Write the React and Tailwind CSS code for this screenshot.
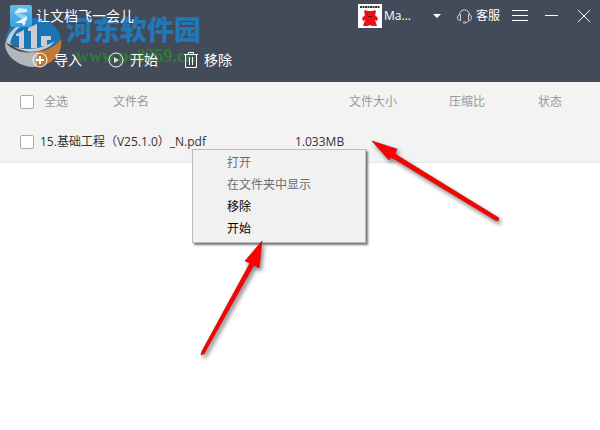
// App.jsx

import { useState } from 'react';

const menuItems = [
  { label: '打开', disabled: true },
  { label: '在文件夹中显示', disabled: true },
  { label: '移除', disabled: false },
  { label: '开始', disabled: false },
];

const boxClass =
  'block size-3.5 shrink-0 appearance-none rounded-xs border border-[#ababab] bg-white checked:bg-blue-500';

const AppLogo = () => (
  <svg viewBox="0 0 22 22" className="size-[22px]" aria-hidden="true">
    <defs>
      <linearGradient id="logoFill" x1="0" y1="0" x2="0" y2="1">
        <stop offset="0" stopColor="#62bdec" />
        <stop offset="1" stopColor="#3a9ee2" />
      </linearGradient>
    </defs>
    <rect width="22" height="22" rx="2" fill="url(#logoFill)" />
    <path d="M4 8l5-5 8 1v3l-8 1z" fill="#d5effc" />
    <path d="M4 8l5 0 8 3-3 4-7-4z" fill="#8fd0f5" />
    <path d="M17 11v4l-4 3H5l7-4zM11 17h5l-2 4z" fill="#e6f6fe" />
  </svg>
);

const Watermark = () => (
  <div className="pointer-events-none absolute left-1 top-4 flex" aria-hidden="true">
    <svg viewBox="4 16 60 52" className="h-[52px] w-[60px]">
      <path d="M5 42C6 27 18 18 33 18c15 0 27 9 28 23l-11 7c-14 3-28 2-41-6z" fill="#1d74b4" />
      <path d="M61 39c2 16-10 27-26 28l-5-2V52c13 0 25-4 31-13z" fill="#c07a33" />
      <path d="M5 42c-1 13 12 24 28 25l4-1 1-14C24 54 12 51 5 42z" fill="#b3b6bb" />
      <path d="M6 43c2-11 10-19 24-22-9 4-17 11-18 24z" fill="#c5cad0" />
      <path d="M10 43c2-8 6-14 12-17-5 6-8 11-8 20z" fill="#1d74b4" />
      <path d="M16 34l8-4v18h-5V36h-3zM28 28l9-4v24h-6V31h-3zM41 36h10v4h-4v6h-6z" fill="#c9ced4" />
      <path d="M13 46c12 5 27 4 42-5-8 11-28 15-42 5z" fill="#c9ced4" />
    </svg>
    <div className="pl-0.5">
      <p className="text-[27px] leading-7 font-black text-[#2277b5]">河东软件园</p>
      <p className="pl-2.5 font-['Liberation_Serif',serif] text-lg leading-6 font-bold text-[#2b7d35]">
        www.pc0359.cn
      </p>
    </div>
  </div>
);

const Avatar = () => (
  <svg viewBox="0 0 24 24" className="size-6" aria-hidden="true">
    <rect width="24" height="24" fill="#fff" />
    <path d="M2 3h20" stroke="#333" strokeWidth="2" strokeDasharray="2 .5" />
    <path
      d="M7 6l3 1h4l3-1 1 2-1 3 3 3-1 3-2-1 1 3 1 3h-5l-2-1-2 1H5l1-3 1-3-2 1-1-3 3-3-1-3z"
      fill="#e81318"
    />
    <path d="M9 10h1M14 10h1M10 12.500h4" stroke="#7a0a0d" />
  </svg>
);

const Arrows = () => (
  <svg
    viewBox="0 0 600 430"
    className="pointer-events-none absolute left-0 top-0 h-[430px] w-[600px]"
    aria-hidden="true"
  >
    <defs>
      <filter id="arrowShadow" x="-20%" y="-20%" width="150%" height="150%">
        <feDropShadow dx="2" dy="3" stdDeviation="2" floodColor="#000" floodOpacity="0.5" />
      </filter>
    </defs>
    <g filter="url(#arrowShadow)" fill="#f00" stroke="#a01010" strokeWidth="0.6">
      <path d="M372 141l25 8-2 5 104 64-1 3-3-1-104-63-2 3z" />
      <path d="M262 241l-3 27-5-3-50 89-3 1 1-4 48-88-5-2z" />
    </g>
  </svg>
);

const App = () => {
  const [allChecked, setAllChecked] = useState(false);
  const [checked, setChecked] = useState(false);

  return (
    <div className="relative min-h-screen bg-white font-['Open_Sans','Noto_Sans_CJK_SC',sans-serif] text-xs text-[#333]">
      <header className="relative bg-[#444b58] text-white">
        <Watermark />
        <div className="relative flex h-8 items-center justify-between px-2.5">
          <div className="flex items-center gap-1">
            <AppLogo />
            <h1 className="text-sm">让文档飞一会儿</h1>
          </div>
          <div className="flex items-center">
            <button type="button" className="flex items-center gap-0.5">
              <Avatar />
              <span>Ma...</span>
              <svg viewBox="0 0 8 4" className="ml-5 h-1 w-2" aria-hidden="true">
                <path d="M0 0h8L4 4z" fill="#fff" />
              </svg>
            </button>
            <button type="button" className="ml-4 flex items-center gap-1">
              <svg viewBox="0 0 15 15" className="size-[15px]" fill="none" stroke="#d5d8dd" aria-hidden="true">
                <path d="M2.500 6C2.500-.8 12.500-.8 12.500 6M3.500 5.500v6C-.5 12-.5 5.500 3.500 5.500zM11.500 5.500v6c4 .5 4-6 0-6zM12 11.500c-.5 1.500-2 2-4 2" />
                <circle cx="7.500" cy="13.500" r="1" />
              </svg>
              客服
            </button>
            <button type="button" className="ml-3" aria-label="菜单">
              <svg viewBox="0 0 16 12" className="h-3 w-4" stroke="#fff" aria-hidden="true">
                <path d="M0 .5h16M0 5.500h16M0 10.500h16" />
              </svg>
            </button>
            <button type="button" className="ml-4" aria-label="最小化">
              <svg viewBox="0 0 14 12" className="h-3 w-3.5" stroke="#fff" aria-hidden="true">
                <path d="M1 5.500h13" />
              </svg>
            </button>
            <button type="button" className="ml-5" aria-label="关闭">
              <svg viewBox="0 0 12 12" className="size-3" stroke="#fff" aria-hidden="true">
                <path d="M0 0l12 12M12 0L0 12" />
              </svg>
            </button>
          </div>
        </div>
        <nav className="relative flex h-[50px] items-center gap-[26px] pl-8 pt-1.5 text-sm">
          <button type="button" className="flex items-center gap-1.5">
            <svg viewBox="0 0 16 16" className="size-4" fill="none" stroke="#fff" aria-hidden="true">
              <circle cx="8" cy="8" r="7" />
              <path d="M8 4v8M4 8h8" strokeWidth="2" />
            </svg>
            导入
          </button>
          <button type="button" className="flex items-center gap-1.5">
            <svg viewBox="0 0 16 16" className="size-4" fill="none" stroke="#fff" aria-hidden="true">
              <circle cx="8" cy="8" r="7" />
              <path d="M6 5l5 3-5 3z" fill="#d9e6dc" stroke="none" />
            </svg>
            开始
          </button>
          <button type="button" className="flex items-center gap-1.5">
            <svg viewBox="0 0 14 16" className="h-4 w-3.5" fill="none" stroke="#fff" aria-hidden="true">
              <path d="M0 2.500h14M4.500 2V.5h5V2M1.500 3v12.500h11V3M5.500 5v8M8.500 5v8" />
            </svg>
            移除
          </button>
        </nav>
      </header>

      <table className="w-full table-fixed border-b border-[#e6e6e6] bg-[#f3f3f3] text-left">
        <colgroup>
          <col className="w-10" />
          <col className="w-[73px]" />
          <col />
          <col className="w-[54px]" />
          <col className="w-[100px]" />
          <col className="w-[89px]" />
          <col className="w-[62px]" />
        </colgroup>
        <thead>
          <tr className="h-10 text-[#999]">
            <th colSpan={2} className="pl-5 font-normal">
              <label className="flex items-center gap-2.5">
                <input
                  type="checkbox"
                  className={boxClass}
                  checked={allChecked}
                  onChange={(e) => {
                    setAllChecked(e.target.checked);
                    setChecked(e.target.checked);
                  }}
                />
                全选
              </label>
            </th>
            <th colSpan={2} className="font-normal">文件名</th>
            <th className="font-normal">文件大小</th>
            <th className="font-normal">压缩比</th>
            <th className="font-normal">状态</th>
          </tr>
        </thead>
        <tbody>
          <tr className="h-10">
            <td className="pl-5">
              <input
                type="checkbox"
                id="file"
                className={boxClass}
                checked={checked}
                onChange={(e) => setChecked(e.target.checked)}
              />
            </td>
            <td colSpan={2}>
              <label htmlFor="file">15.基础工程（V25.1.0）_N.pdf</label>
            </td>
            <td colSpan={2}>1.033MB</td>
            <td></td>
            <td></td>
          </tr>
        </tbody>
      </table>

      {/* Context menu */}
      <ul className="absolute left-48 top-[149px] w-[174px] border border-[#bcbcbc] bg-[#f1f1f1] py-0.5 shadow-[2px_2px_2px_#777]">
        {menuItems.map((item) => (
          <li key={item.label}>
            <button
              type="button"
              disabled={item.disabled}
              className="block h-[22px] w-full pl-[34px] text-left text-black disabled:text-[#6d6d6d]"
            >
              {item.label}
            </button>
          </li>
        ))}
      </ul>

      <Arrows />
    </div>
  );
};

export default App;
